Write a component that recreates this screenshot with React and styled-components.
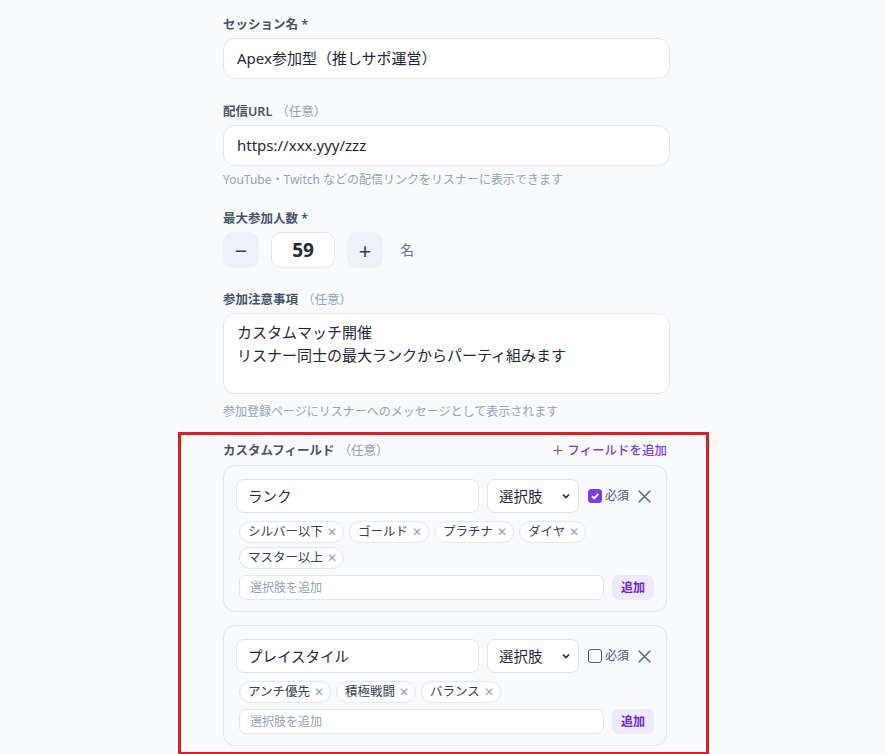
import React from "react";
import styled, { createGlobalStyle } from "styled-components";

const Global = createGlobalStyle`
  html, body { margin: 0; padding: 0; background: #f8fafc; }
  body { font-family: "Noto Sans", "Noto Sans CJK JP", sans-serif; color: #1e293b; line-height: 1.3; }
  * { box-sizing: border-box; }
`;

const Page = styled.div`
  width: 447px; margin-left: 223px; padding-top: 16px; padding-bottom: 20px;
  display: flex; flex-direction: column;
`;
const Field = styled.div`display: flex; flex-direction: column; margin-bottom: ${p => p.$mb || 24}px;`;
const Label = styled.div`
  font-size: 12.5px; font-weight: 600; color: #475569; height: 18px; line-height: 18px; margin-bottom: ${p => p.$mb ?? 4}px;
  display: flex; align-items: center; justify-content: space-between;
`;
const Opt = styled.span`font-weight: 400; color: #94a3b8; margin-left: 4px;`;
const Input = styled.div`
  height: 41px; border: 1px solid #e2e8f0; background: #fff; border-radius: 12px;
  padding: 0 13px; display: flex; align-items: center; font-size: 15px; color: #1e293b;
`;
const Area = styled(Input)`height: 81px; align-items: flex-start; flex-direction: column; padding-top: 7px; line-height: 23px;`;
const Help = styled.div`font-size: 12px; color: #94a3b8; margin-top: ${p => p.$mt || 6}px; line-height: 16px;`;
const Stepper = styled.div`display: flex; align-items: center; gap: 12px;`;
const StepBtn = styled.div`
  width: 36px; height: 36px; border-radius: 10px; background: #eef2f7;
  display: flex; align-items: center; justify-content: center; font-size: 22px; color: #334155;
`;
const Num = styled.div`
  width: 64px; height: 36px; border-radius: 10px; background: #fff; border: 1px solid #e2e8f0;
  display: flex; align-items: center; justify-content: center; font-size: 19px; font-weight: 700;
`;
const Unit = styled.span`font-size: 14px; color: #64748b; margin-left: 5px;`;
const Marked = styled.div`
  margin-left: -45px; width: 531px; border: 3px solid #e31b23; padding: 7px 39px 6px 42px;
`;
const AddLink = styled.span`color: #7c3aed; font-weight: 500; font-size: 12.5px;`;
const Card = styled.div`
  border: 1px solid #e2e8f0; border-radius: 12px; background: #f8fafc; padding: 13px 12px 11px 12px;
  display: flex; flex-direction: column; margin-bottom: ${p => p.$mb}px;
`;
const Row = styled.div`display: flex; align-items: center; gap: 8px; margin-bottom: 8px;`;
const NameInput = styled.div`
  width: 246px; height: 34px; background: #fff; border: 1px solid #e2e8f0; border-radius: 8px;
  padding: 0 11px; display: flex; align-items: center; font-size: 14.5px;
`;
const Select = styled(NameInput)`width: 93px; justify-content: space-between; padding: 0 6px 0 11px;`;
const Req = styled.label`display: flex; align-items: center; gap: 3px; font-size: 12px; color: #475569; margin-left: 1px; white-space: nowrap;`;
const Box = styled.span`
  width: 14px; height: 14px; border-radius: 3px; display: inline-flex; align-items: center; justify-content: center;
  background: ${p => p.$on ? "#7c3aed" : "#fff"}; border: 1.5px solid ${p => p.$on ? "#7c3aed" : "#475569"};
`;
const Close = styled.span`margin-left: auto; margin-right: 2px; display: flex; color: #64748b;`;
const Chips = styled.div`display: flex; flex-wrap: wrap; gap: 4px 5px; padding-left: 3px; margin-bottom: 6px;`;
const Chip = styled.span`
  height: 22px; border: 1px solid #e2e8f0; background: #fff; border-radius: 11px; padding: 0 6px 0 8px;
  display: inline-flex; align-items: center; gap: 4px; font-size: 12.5px; color: #334155;
`;
const ChipX = styled.span`color: #94a3b8; font-size: 12px;`;
const AddRow = styled.div`display: flex; gap: 8px; padding-left: 3px;`;
const AddInput = styled.div`
  flex: 1; height: 25px; background: #fff; border: 1px solid #e2e8f0; border-radius: 7px;
  padding: 0 10px; display: flex; align-items: center; font-size: 12px; color: #94a3b8;
`;
const AddBtn = styled.div`
  width: 42px; height: 25px; border-radius: 7px; background: #ede9fe; color: #6d28d9;
  font-size: 12px; font-weight: 600; display: flex; align-items: center; justify-content: center;
`;

const X = ({ s = 14 }) => (
  <svg width={s} height={s} viewBox="0 0 14 14" fill="none" stroke="currentColor" strokeWidth="1.4" strokeLinecap="round">
    <path d="M2 2L12 12M12 2L2 12" />
  </svg>
);

const FieldCard = ({ name, on, options, mb }) => (
  <Card $mb={mb}>
    <Row>
      <NameInput>{name}</NameInput>
      <Select>選択肢
        <svg width="12" height="12" viewBox="0 0 12 12" fill="none" stroke="#1e293b" strokeWidth="1.6"><path d="M3 4.5L6 7.5L9 4.5" /></svg>
      </Select>
      <Req>
        <Box $on={on}>{on && <svg width="10" height="10" viewBox="0 0 10 10" fill="none" stroke="#fff" strokeWidth="1.8"><path d="M2 5.2L4.2 7.4L8.2 2.8" /></svg>}</Box>
        必須
      </Req>
      <Close><X s={15} /></Close>
    </Row>
    <Chips>{options.map(o => <Chip key={o}>{o}<ChipX>✕</ChipX></Chip>)}</Chips>
    <AddRow><AddInput>選択肢を追加</AddInput><AddBtn>追加</AddBtn></AddRow>
  </Card>
);

export default function App() {
  return (
    <Page>
      <Global />
      <Field>
        <Label><span>セッション名 *</span></Label>
        <Input>Apex参加型（推しサポ運営）</Input>
      </Field>
      <Field $mb={22}>
        <Label><span>配信URL<Opt>（任意）</Opt></span></Label>
        <Input>https://xxx.yyy/zzz</Input>
        <Help>YouTube・Twitch などの配信リンクをリスナーに表示できます</Help>
      </Field>
      <Field $mb={23}>
        <Label><span>最大参加人数 *</span></Label>
        <Stepper>
          <StepBtn>−</StepBtn><Num>59</Num><StepBtn>+</StepBtn><Unit>名</Unit>
        </Stepper>
      </Field>
      <Field $mb={12}>
        <Label><span>参加注意事項<Opt>（任意）</Opt></span></Label>
        <Area><div>カスタムマッチ開催</div><div>リスナー同士の最大ランクからパーティ組みます</div></Area>
        <Help $mt={10}>参加登録ページにリスナーへのメッセージとして表示されます</Help>
      </Field>
      <Marked>
        <Label $mb={5}><span>カスタムフィールド<Opt>（任意）</Opt></span><AddLink>＋ フィールドを追加</AddLink></Label>
        <FieldCard mb={13} name="ランク" on options={["シルバー以下", "ゴールド", "プラチナ", "ダイヤ", "マスター以上"]} />
        <FieldCard mb={0} name="プレイスタイル" options={["アンチ優先", "積極戦闘", "バランス"]} />
      </Marked>
    </Page>
  );
}
